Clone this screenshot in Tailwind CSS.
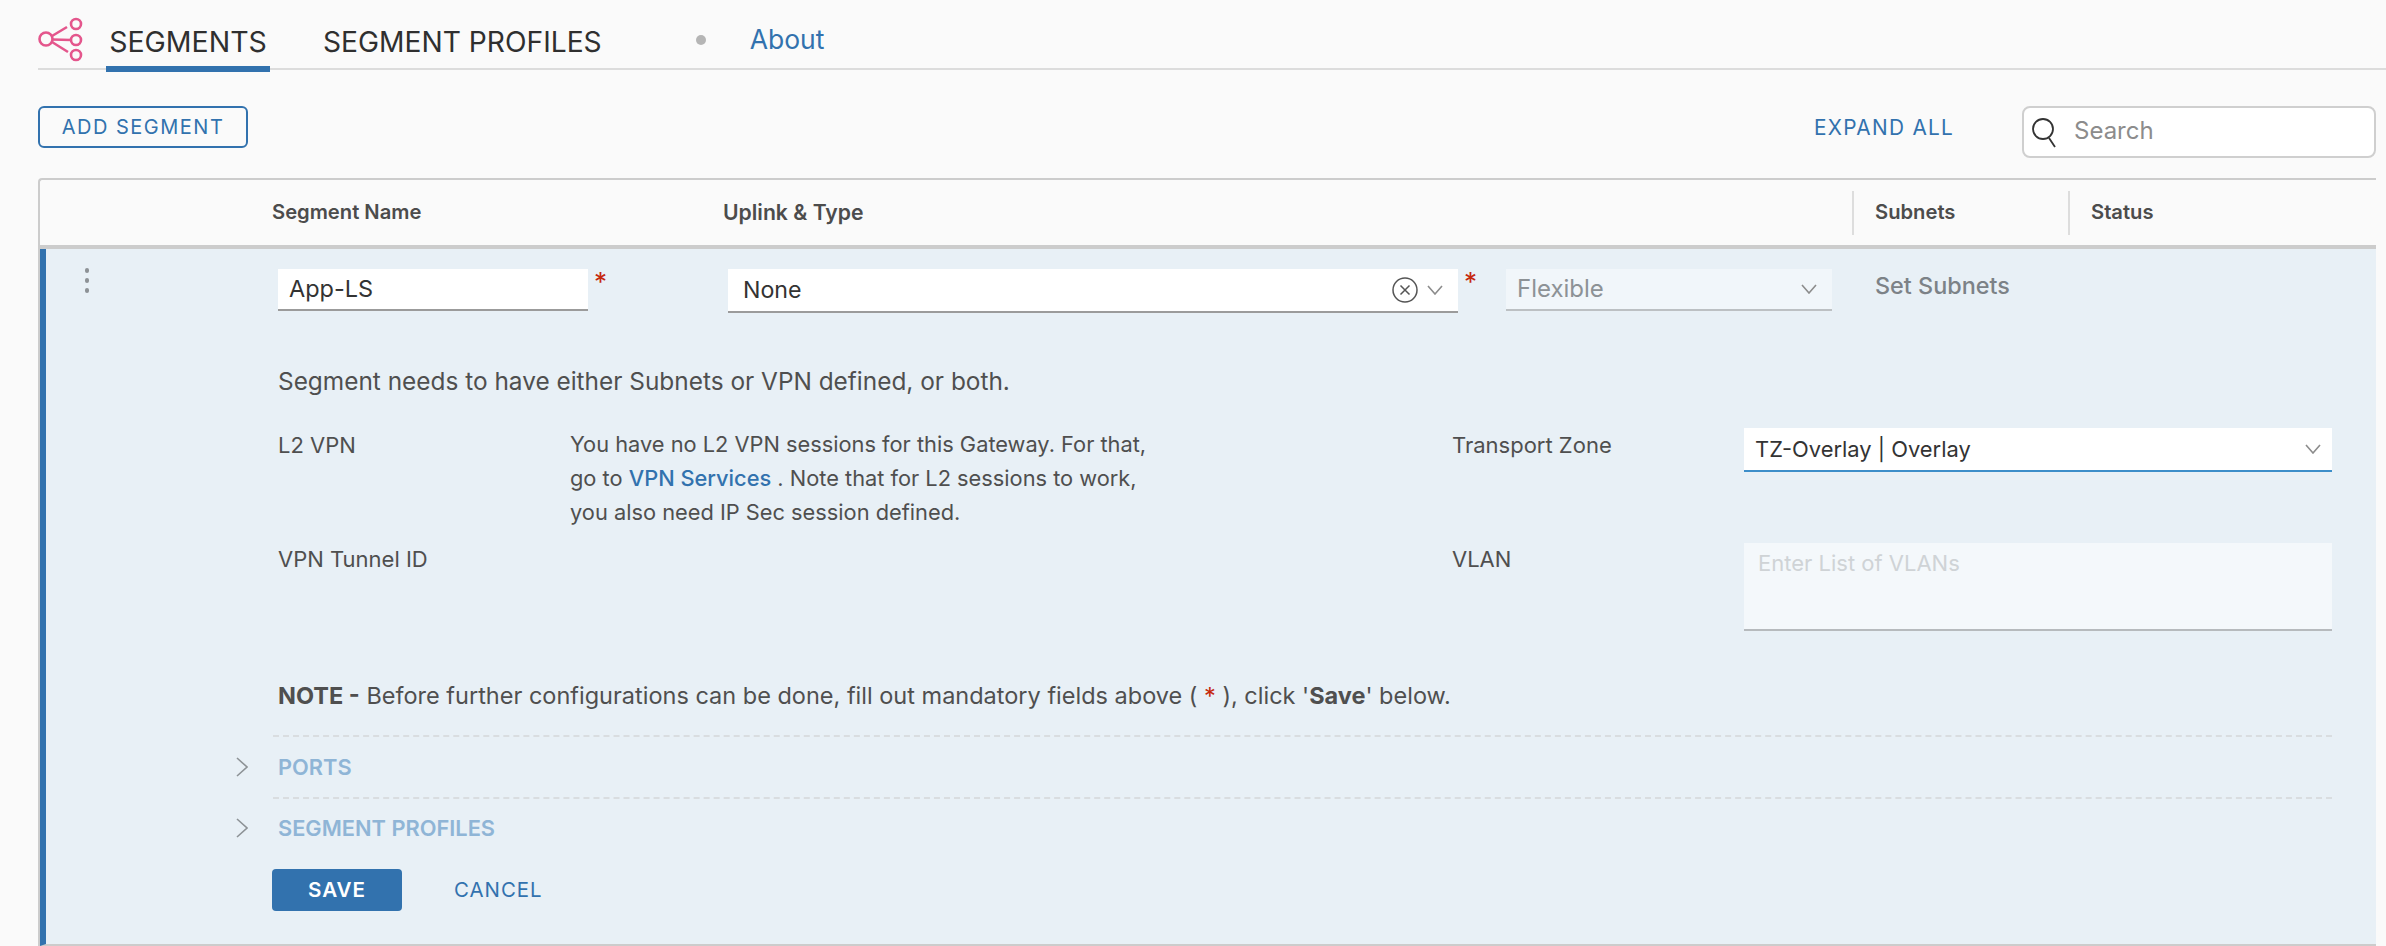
<!DOCTYPE html>
<html>
<head>
<meta charset="utf-8">
<script src="https://cdn.jsdelivr.net/npm/@tailwindcss/browser@4"></script>
</head>
<body class="bg-[#fafafa] font-['Inter',sans-serif] text-[#4f4f4f] w-[2386px] h-[946px] overflow-hidden">
<div class="ml-[38px] h-[70px] border-b-2 border-[#dcdcdc] flex relative">
  <svg class="w-[46px] h-[46px] mt-[16px] shrink-0" viewBox="0 0 46 46" fill="none" stroke="#e4568c" stroke-width="2.6">
    <circle cx="8" cy="23" r="6.5"/><circle cx="38" cy="8" r="5"/><circle cx="38" cy="24" r="5"/><circle cx="38" cy="39" r="5"/>
    <path d="M14 20 L29 11 M14.500 23.500 L33 24 M14 26 L30 36"/>
  </svg>
  <div class="ml-[22px] w-[164px] h-[72px] border-b-[6px] border-[#3272ae] text-center text-[28.5px] leading-[84px] text-[#2f2f2f] shrink-0">SEGMENTS</div>
  <div class="ml-[53px] h-[72px] text-[28.2px] leading-[84px] text-[#2f2f2f] shrink-0">SEGMENT PROFILES</div>
  <div class="ml-[94px] mt-[35px] w-[10px] h-[10px] rounded-full bg-[#b5b5b5] shrink-0"></div>
  <div class="ml-[44px] text-[26.5px] leading-[78px] text-[#3272ae] shrink-0">About</div>
</div>

<div class="h-[108px] pl-[38px] flex items-start pt-[36px]">
  <div class="w-[210px] h-[42px] border-2 border-[#3272ae] rounded-[6px] flex items-center justify-center text-[20px] tracking-[1.5px] text-[#3272ae]">ADD SEGMENT</div>
  <div class="ml-[1566px] mt-[10px] text-[20.8px] tracking-[1.3px] text-[#3272ae] leading-[24px] w-[208px]">EXPAND ALL</div>
  <div class="w-[354px] h-[52px] border-2 border-[#cfcfcf] rounded-[8px] bg-white flex items-center pb-[2px] shrink-0">
    <svg class="w-[30px] h-[34px] ml-[6px] shrink-0" viewBox="0 0 30 34" fill="none" stroke="#333" stroke-width="1.8"><circle cx="13" cy="15" r="10"/><path d="M19 24 L25 33"/></svg>
    <span class="ml-[14px] text-[24px] text-[#8c8c8c]">Search</span>
  </div>
</div>

<div class="ml-[38px] w-[2338px] border-t-2 border-l-2 border-[#cccccc] rounded-tl-[4px]">
  <div class="h-[65px] border-b-4 border-[#cccccc] box-content flex items-center text-[20.2px] font-semibold text-[#4c4c4c]">
    <div class="ml-[232px] w-[451px]">Segment Name</div>
    <div class="w-[1129px] text-[21.2px]">Uplink &amp; Type</div>
    <div class="h-[44px] w-[216px] border-l-2 border-[#dddddd] pl-[21px] flex items-center">Subnets</div>
    <div class="h-[44px] border-l-2 border-[#dddddd] pl-[21px] flex items-center">Status</div>
  </div>

  <div class="h-[697px] bg-[#e8f0f6] border-l-[6px] border-[#3272ae] border-b-2 border-b-[#cccccc] text-[22px] relative">
    <div class="flex items-start pt-[20px]">
      <div class="w-[42px] shrink-0 pl-[39px]">
        <div class="flex flex-col gap-[5px] mt-[-1px] w-[4px]">
          <span class="w-[4px] h-[5px] rounded-full bg-[#8d9296]"></span>
          <span class="w-[4px] h-[5px] rounded-full bg-[#8d9296]"></span>
          <span class="w-[4px] h-[5px] rounded-full bg-[#8d9296]"></span>
        </div>
      </div>
      <div class="ml-[190px] w-[310px] h-[42px] bg-white border-b-2 border-[#9b9b9b] pl-[11px] text-[23.5px] leading-[40px] text-[#333] shrink-0">App-LS</div>
      <div class="ml-[6px] w-[134px] text-[#c5280c] text-[26px] leading-[26px] shrink-0">*</div>
      <div class="w-[730px] h-[44px] bg-white border-b-2 border-[#9b9b9b] pl-[15px] pr-[15px] flex items-center text-[23.2px] text-[#333] shrink-0">
        <span class="flex-1">None</span>
        <svg class="w-[26px] h-[28px] shrink-0" viewBox="0 0 26 28" fill="none" stroke="#555" stroke-width="1.5"><circle cx="13" cy="14" r="12"/><path d="M8.500 9.500 L17.500 18.500 M17.500 9.500 L8.500 18.500"/></svg>
        <svg class="w-[16px] h-[10px] ml-[9px] shrink-0" viewBox="0 0 16 10" fill="none" stroke="#8c8c8c" stroke-width="1.6"><path d="M1 1 L8 9 L15 1"/></svg>
      </div>
      <div class="ml-[6px] w-[42px] text-[#c5280c] text-[26px] leading-[26px] shrink-0">*</div>
      <div class="w-[326px] h-[42px] bg-[#f1f6fa] border-b-2 border-[#bcc0c3] pl-[11px] pr-[15px] flex items-center text-[24px] text-[#8d9296] shrink-0">
        <span class="flex-1">Flexible</span>
        <svg class="w-[16px] h-[10px] shrink-0" viewBox="0 0 16 10" fill="none" stroke="#8c8c8c" stroke-width="1.6"><path d="M1 1 L8 9 L15 1"/></svg>
      </div>
      <div class="ml-[43px] mt-[-1px] text-[#7c8287] font-medium text-[23.4px]">Set Subnets</div>
    </div>

    <div class="pl-[232px] pt-[54px] leading-[28px] text-[24.4px]">Segment needs to have either Subnets or VPN defined, or both.</div>

    <div class="ml-[232px] mt-[33px] grid grid-cols-[292px_882px_292px_588px] grid-rows-[125px_auto]">
      <div class="mt-[3px] leading-[28px]">L2 VPN</div>
      <div class="text-[21.8px] leading-[34px] mt-[-1px]">You have no L2 VPN sessions for this Gateway. For that,<br>go to <span class="text-[#3272ae] font-medium">VPN Services</span> . Note that for L2 sessions to work,<br>you also need IP Sec session defined.</div>
      <div class="mt-[3px] leading-[28px]">Transport Zone</div>
      <div class="h-[44px] bg-white border-b-2 border-[#3d8ec9] px-[11px] flex items-center text-[21.9px] text-[#333] mt-[0px]">
        <span class="flex-1">TZ-Overlay | Overlay</span>
        <svg class="w-[16px] h-[10px] shrink-0" viewBox="0 0 16 10" fill="none" stroke="#8c8c8c" stroke-width="1.6"><path d="M1 1 L8 9 L15 1"/></svg>
      </div>
      <div class="leading-[28px] mt-[-8px]">VPN Tunnel ID</div>
      <div></div>
      <div class="leading-[28px] mt-[-8px]">VLAN</div>
      <div class="h-[88px] bg-[#f4f8fb] border-b-2 border-[#b6babd] px-[14px] pt-[4px] text-[22px] text-[#cfd3d6] mt-[-10px]">Enter List of VLANs</div>
    </div>

    <div class="pl-[232px] mt-[51px] leading-[28px] text-[23.5px]"><b class="font-bold">NOTE -</b> Before further configurations can be done, fill out mandatory fields above ( <span class="text-[#c5280c]">*</span> ), click '<b class="font-bold">Save</b>' below.</div>

    <div class="ml-[227px] mr-[44px] mt-[25px] border-t-2 border-dashed border-[#d9dde0] h-[62px] flex items-center relative text-[21.8px] font-semibold text-[#8fb5d6]">
      <svg class="w-[12px] h-[20px] ml-[-37px] mr-[30px] shrink-0" viewBox="0 0 12 20" fill="none" stroke="#8d9296" stroke-width="1.6"><path d="M1 1 L11 10 L1 19"/></svg>
      <span>PORTS</span>
    </div>
    <div class="ml-[227px] mr-[44px] border-t-2 border-dashed border-[#d9dde0] h-[60px] flex items-center relative text-[21.8px] font-semibold text-[#8fb5d6]">
      <svg class="w-[12px] h-[20px] ml-[-37px] mr-[30px] shrink-0" viewBox="0 0 12 20" fill="none" stroke="#8d9296" stroke-width="1.6"><path d="M1 1 L11 10 L1 19"/></svg>
      <span>SEGMENT PROFILES</span>
    </div>
    <div class="ml-[226px] mt-[12px] flex items-center">
      <div class="w-[130px] h-[42px] rounded-[4px] bg-[#3272ae] text-white font-semibold text-[20.6px] tracking-[1px] flex items-center justify-center">SAVE</div>
      <div class="ml-[52px] text-[20.4px] tracking-[1px] text-[#3272ae]">CANCEL</div>
    </div>
  </div>
</div>
</body>
</html>
